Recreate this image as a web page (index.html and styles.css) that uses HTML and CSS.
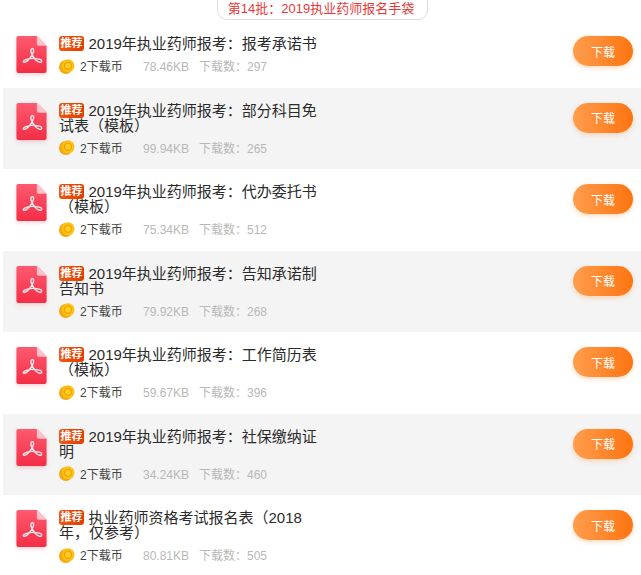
FILE: index.html
```html
<!DOCTYPE html>
<html>
  <head>
  <title>第14批：2019执业药师报名手袋</title>
  <meta charset="utf-8">
  <link rel="stylesheet" href="styles.css">
  </head>
  <body>

    <svg class="defs" width="0" height="0">
      <defs>
        <linearGradient id="pdf-grad" x1="0" y1="0" x2="0" y2="1">
          <stop offset="0" stop-color="#fe5a70"/>
          <stop offset="1" stop-color="#f32e46"/>
        </linearGradient>
        <radialGradient id="coin-grad" cx="0.5" cy="0.5" r="0.6">
          <stop offset="0" stop-color="#ffd21f"/>
          <stop offset="1" stop-color="#fdb90f"/>
        </radialGradient>
        <symbol id="pdf" viewBox="0 0 31 38">
          <path d="M2 0H21L31 10V36a2 2 0 0 1-2 2H2a2 2 0 0 1-2-2V2a2 2 0 0 1 2-2z" fill="url(#pdf-grad)"/>
          <path d="M21 0L31 10H23a2 2 0 0 1-2-2z" fill="#ffc2c9"/>
          <path d="M16.500 13C14.500 13 14.500 16 15.500 18C17 21.500 20 26 24 27C26.500 27.500 26.500 24.500 24.500 24C20 23 13 22.500 9 24.500C6.500 25.500 6.500 27.500 8.500 27C11 26.500 15 22 16.800 18C18 15.500 18 13 16.500 13Z" fill="none" stroke="#ffeef0" stroke-width="1.400"/>
        </symbol>
        <symbol id="coin" viewBox="0 0 16 15">
          <ellipse cx="6.800" cy="8" rx="6.800" ry="7" fill="#f7a50c"/>
          <circle cx="9" cy="6.800" r="6.500" fill="url(#coin-grad)"/>
          <circle cx="9" cy="6.800" r="3.600" fill="none" stroke="#f0a208" stroke-width="1.200"/>
        </symbol>
      </defs>
    </svg>

    <div class="batch"><span class="batch-pill">第14批：2019执业药师报名手袋</span></div>

    <ul class="file-list">
      <li class="file">
        <svg class="pdf-icon"><use href="#pdf"/></svg>
        <div class="file-info">
          <div class="file-title"><span class="tag">推荐</span>2019年执业药师报考：报考承诺书</div>
          <div class="file-meta"><svg class="coin"><use href="#coin"/></svg><span class="price">2下载币</span><span class="size">78.46KB</span><span class="count">下载数：297</span></div>
        </div>
        <button class="download">下载</button>
      </li>
      <li class="file">
        <svg class="pdf-icon"><use href="#pdf"/></svg>
        <div class="file-info">
          <div class="file-title"><span class="tag">推荐</span>2019年执业药师报考：部分科目免试表（模板）</div>
          <div class="file-meta"><svg class="coin"><use href="#coin"/></svg><span class="price">2下载币</span><span class="size">99.94KB</span><span class="count">下载数：265</span></div>
        </div>
        <button class="download">下载</button>
      </li>
      <li class="file">
        <svg class="pdf-icon"><use href="#pdf"/></svg>
        <div class="file-info">
          <div class="file-title"><span class="tag">推荐</span>2019年执业药师报考：代办委托书（模板）</div>
          <div class="file-meta"><svg class="coin"><use href="#coin"/></svg><span class="price">2下载币</span><span class="size">75.34KB</span><span class="count">下载数：512</span></div>
        </div>
        <button class="download">下载</button>
      </li>
      <li class="file">
        <svg class="pdf-icon"><use href="#pdf"/></svg>
        <div class="file-info">
          <div class="file-title"><span class="tag">推荐</span>2019年执业药师报考：告知承诺制告知书</div>
          <div class="file-meta"><svg class="coin"><use href="#coin"/></svg><span class="price">2下载币</span><span class="size">79.92KB</span><span class="count">下载数：268</span></div>
        </div>
        <button class="download">下载</button>
      </li>
      <li class="file">
        <svg class="pdf-icon"><use href="#pdf"/></svg>
        <div class="file-info">
          <div class="file-title"><span class="tag">推荐</span>2019年执业药师报考：工作简历表（模板）</div>
          <div class="file-meta"><svg class="coin"><use href="#coin"/></svg><span class="price">2下载币</span><span class="size">59.67KB</span><span class="count">下载数：396</span></div>
        </div>
        <button class="download">下载</button>
      </li>
      <li class="file">
        <svg class="pdf-icon"><use href="#pdf"/></svg>
        <div class="file-info">
          <div class="file-title"><span class="tag">推荐</span>2019年执业药师报考：社保缴纳证明</div>
          <div class="file-meta"><svg class="coin"><use href="#coin"/></svg><span class="price">2下载币</span><span class="size">34.24KB</span><span class="count">下载数：460</span></div>
        </div>
        <button class="download">下载</button>
      </li>
      <li class="file">
        <svg class="pdf-icon"><use href="#pdf"/></svg>
        <div class="file-info">
          <div class="file-title"><span class="tag">推荐</span>执业药师资格考试报名表（2018年，仅参考）</div>
          <div class="file-meta"><svg class="coin"><use href="#coin"/></svg><span class="price">2下载币</span><span class="size">80.81KB</span><span class="count">下载数：505</span></div>
        </div>
        <button class="download">下载</button>
      </li>
    </ul>

  </body>
</html>
```

FILE: styles.css
```css
html,
body
{
  height: 575px;
  overflow: hidden;
}

body
{
  margin: 0;
  background-color: #fff;
  font-family: "Liberation Sans", "Noto Sans CJK SC", sans-serif;
  color: #333;
}

.defs
{
  display: block;
  height: 0;
}

.batch
{
  display: flex;
  justify-content: center;
  height: 21px;
  padding-left: 4px;
}
.batch-pill
{
  display: block;
  box-sizing: border-box;
  width: 211px;
  height: 30px;
  margin-top: -10px;
  padding-top: 9px;
  padding-right: 3px;
  border: 1px solid #dcdcdc;
  border-radius: 10px;
  color: #e8393a;
  font-size: 13px;
  line-height: 18px;
  text-align: center;
  white-space: nowrap;
}

.file-list
{
  list-style-type: none;
  margin: 0 0 0 3px;
  padding: 0;
}

.file
{
  display: flex;
  align-items: flex-start;
  box-sizing: border-box;
  padding: 15px 8px 12.500px 13px;
}
.file:nth-child(even)
{
  background-color: #f4f4f4;
}

.pdf-icon
{
  flex: none;
  width: 31px;
  height: 37px;
  margin-right: 12px;
  filter: drop-shadow(0 2px 2px rgba(245, 45, 68, 0.2));
}

.file-info
{
  flex: none;
  width: 259.500px;
}

.file-title
{
  font-size: 15px;
  line-height: 15px;
  color: #2b2b2b;
}

.tag
{
  display: inline-block;
  width: 25px;
  height: 15px;
  margin-right: 4.500px;
  border-radius: 3px;
  background: linear-gradient(to right, #f2570f, #e63c00);
  color: #fff;
  font-size: 11px;
  font-weight: bold;
  line-height: 15px;
  text-align: center;
  vertical-align: top;
}

.file-meta
{
  display: flex;
  align-items: center;
  margin-top: 8px;
  font-size: 12px;
  line-height: 16px;
}

.coin
{
  width: 16px;
  height: 15px;
  margin-top: -2px;
  margin-right: 5px;
}

.price
{
  width: 63px;
  color: #444;
}
.size
{
  width: 56px;
  color: #b8b8b8;
}
.count
{
  color: #b8b8b8;
}

.download
{
  flex: none;
  width: 60px;
  height: 30px;
  margin-left: auto;
  padding: 0;
  border: none;
  border-radius: 15px;
  background: linear-gradient(to right, #ff9d4d, #ff7410);
  box-shadow: 0 2px 5px rgba(255, 140, 50, 0.3);
  color: #fff;
  font-family: inherit;
  font-size: 12px;
}
```
